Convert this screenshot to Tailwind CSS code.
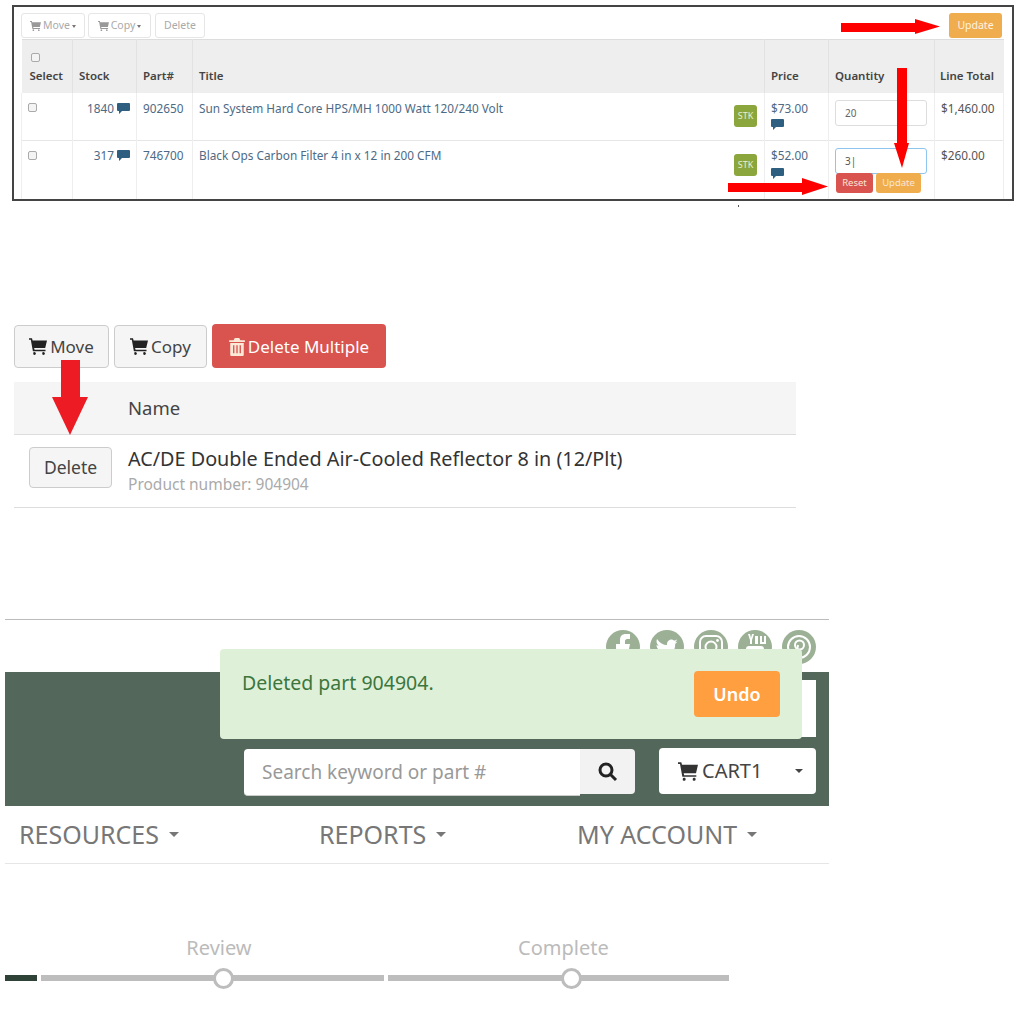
<!DOCTYPE html>
<html lang="en">

<head>
    <meta charset="UTF-8">
    <title>Cart help</title>
    <script src="https://cdn.jsdelivr.net/npm/@tailwindcss/browser@4"></script>
</head>

<body class="bg-white font-['Noto_Sans',sans-serif] text-[#333]">
    <div class="relative w-[1018px] h-[1017px] overflow-hidden pt-[5px]">

        <!-- Cart table panel -->
        <section class="relative ml-[12px] w-[1002px] h-[196px] border-2 border-[#444] overflow-hidden pl-[7px] pr-[10px] pt-[6px]">
            <div class="flex justify-between h-[26px]">
                <div class="flex text-[10.5px] text-[#aaa]">
                    <span class="flex items-center justify-center gap-[2px] w-[64px] h-[25px] pt-[1px] border border-[#e6e6e6] rounded-[3px]">
                        <svg class="w-[11px] h-[10px]" viewBox="0 0 12 11" fill="#999"><path d="M0 0h2l.4 1.5H12l-1.2 5H3.4l.3 1.2H11v1H2.6L1.2 1H0zM4 9.3a.9.9 0 1 0 0 1.7.9.9 0 0 0 0-1.7zm6 0a.9.9 0 1 0 0 1.7.9.9 0 0 0 0-1.7z"/></svg>
                        Move <span class="border-x-[2px] border-t-[3px] border-x-transparent border-t-[#777]"></span>
                    </span>
                    <span class="flex items-center justify-center gap-[2px] w-[63px] h-[25px] pt-[1px] ml-[3px] border border-[#e6e6e6] rounded-[3px]">
                        <svg class="w-[11px] h-[10px]" viewBox="0 0 12 11" fill="#999"><path d="M0 0h2l.4 1.5H12l-1.2 5H3.4l.3 1.2H11v1H2.6L1.2 1H0zM4 9.3a.9.9 0 1 0 0 1.7.9.9 0 0 0 0-1.7zm6 0a.9.9 0 1 0 0 1.7.9.9 0 0 0 0-1.7z"/></svg>
                        Copy <span class="border-x-[2px] border-t-[3px] border-x-transparent border-t-[#777]"></span>
                    </span>
                    <span class="flex items-center justify-center w-[50px] h-[25px] pt-[1px] ml-[4px] border border-[#e6e6e6] rounded-[3px]">Delete</span>
                </div>
                <span class="flex items-center justify-center w-[53px] h-[25px] pt-[1px] bg-[#f0ad4e] rounded-[3px] text-[10.5px] text-[#fdf3e0]">Update</span>
            </div>

            <table class="table-fixed w-[982px] text-[11.8px] border-t border-[#ddd]">
                <colgroup>
                    <col class="w-[51px]"><col class="w-[64px]"><col class="w-[56px]"><col class="w-[572px]">
                    <col class="w-[64px]"><col class="w-[106px]"><col class="w-[69px]">
                </colgroup>
                <thead class="bg-[#eeeeee] text-[#444] text-[11.5px]">
                    <tr class="h-[53px] align-bottom">
                        <th class="text-left font-semibold border-r border-[#e2e2e2] pl-[8px] pb-[8px]">
                            <span class="block w-[9px] h-[9px] ml-[1px] mb-[5px] border border-[#aaa] rounded-[2px] bg-[#f4f4f4]"></span>Select
                        </th>
                        <th class="text-left font-semibold border-r border-[#e2e2e2] pl-[6px] pb-[8px]">Stock</th>
                        <th class="text-left font-semibold border-r border-[#e2e2e2] pl-[6px] pb-[8px]">Part#</th>
                        <th class="text-left font-semibold border-r border-[#e2e2e2] pl-[6px] pb-[8px]">Title</th>
                        <th class="text-left font-semibold border-r border-[#e2e2e2] pl-[6px] pb-[8px]">Price</th>
                        <th class="text-left font-semibold border-r border-[#e2e2e2] pl-[6px] pb-[8px]">Quantity</th>
                        <th class="text-left font-semibold pl-[5px] pb-[8px]">Line Total</th>
                    </tr>
                </thead>
                <tbody class="text-[#4d6a85]">
                    <tr class="h-[48px] align-top border-b border-[#e6e6e6]">
                        <td class="border-x border-[#eee] pl-[6px] pt-[10px]"><span class="block w-[9px] h-[9px] border border-[#aaa] rounded-[2px] bg-[#f4f4f4]"></span></td>
                        <td class="border-r border-[#eee] pr-[6px] pt-[7px]">
                            <span class="flex items-center justify-end gap-[3px]">1840
                                <svg class="w-[13px] h-[11px]" viewBox="0 0 13 11" fill="#2f5f80"><path d="M1 0h11a1 1 0 0 1 1 1v6a1 1 0 0 1-1 1H5l-3 3V8H1a1 1 0 0 1-1-1V1a1 1 0 0 1 1-1z"/></svg>
                            </span>
                        </td>
                        <td class="border-r border-[#eee] pl-[6px] pt-[7px]">902650</td>
                        <td class="border-r border-[#eee] pl-[6px] pt-[7px] pr-[7px]">
                            <span class="flex justify-between items-start">
                                Sun System Hard Core HPS/MH 1000 Watt 120/240 Volt
                                <span class="mt-[5px] w-[23px] h-[22px] bg-[#8aa63c] rounded-[3px] text-[9px] leading-[22px] text-center text-[#e8f0d0]">STK</span>
                            </span>
                        </td>
                        <td class="border-r border-[#eee] pl-[6px] pt-[7px]">
                            $73.00
                            <svg class="block w-[13px] h-[11px] mt-[2px]" viewBox="0 0 13 11" fill="#2f5f80"><path d="M1 0h11a1 1 0 0 1 1 1v6a1 1 0 0 1-1 1H5l-3 3V8H1a1 1 0 0 1-1-1V1a1 1 0 0 1 1-1z"/></svg>
                        </td>
                        <td class="border-r border-[#eee] pl-[6px] pt-[7px]">
                            <span class="block w-[92px] h-[26px] border border-[#ddd] rounded-[3px] pl-[9px] text-[10px] leading-[24px] text-[#666]">20</span>
                        </td>
                        <td class="pl-[6px] pt-[7px] border-r border-[#eee] text-[#555]">$1,460.00</td>
                    </tr>
                    <tr class="h-[60px] align-top">
                        <td class="border-x border-[#eee] pl-[6px] pt-[10px]"><span class="block w-[9px] h-[9px] border border-[#aaa] rounded-[2px] bg-[#f4f4f4]"></span></td>
                        <td class="border-r border-[#eee] pr-[6px] pt-[6px]">
                            <span class="flex items-center justify-end gap-[3px]">317
                                <svg class="w-[13px] h-[11px]" viewBox="0 0 13 11" fill="#2f5f80"><path d="M1 0h11a1 1 0 0 1 1 1v6a1 1 0 0 1-1 1H5l-3 3V8H1a1 1 0 0 1-1-1V1a1 1 0 0 1 1-1z"/></svg>
                            </span>
                        </td>
                        <td class="border-r border-[#eee] pl-[6px] pt-[6px]">746700</td>
                        <td class="border-r border-[#eee] pl-[6px] pt-[6px] pr-[7px]">
                            <span class="flex justify-between items-start">
                                Black Ops Carbon Filter 4 in x 12 in 200 CFM
                                <span class="mt-[7px] w-[23px] h-[22px] bg-[#8aa63c] rounded-[3px] text-[9px] leading-[22px] text-center text-[#e8f0d0]">STK</span>
                            </span>
                        </td>
                        <td class="border-r border-[#eee] pl-[6px] pt-[6px]">
                            $52.00
                            <svg class="block w-[13px] h-[11px] mt-[3px]" viewBox="0 0 13 11" fill="#2f5f80"><path d="M1 0h11a1 1 0 0 1 1 1v6a1 1 0 0 1-1 1H5l-3 3V8H1a1 1 0 0 1-1-1V1a1 1 0 0 1 1-1z"/></svg>
                        </td>
                        <td class="border-r border-[#eee] pl-[6px] pt-[7px]">
                            <span class="block w-[92px] h-[26px] border border-[#8ec5ee] rounded-[3px] pl-[9px] text-[10px] leading-[24px] text-[#555]">3|</span>
                            <span class="flex gap-[3px] ml-[1px] mt-[-1px] text-[9.5px] text-[#f8e6d8]">
                                <span class="w-[37px] h-[20px] leading-[20px] text-center bg-[#d9534f] rounded-[3px]">Reset</span>
                                <span class="w-[45px] h-[20px] leading-[20px] text-center bg-[#f0ad4e] rounded-[3px]">Update</span>
                            </span>
                        </td>
                        <td class="pl-[6px] pt-[6px] border-r border-[#eee] text-[#555]">$260.00</td>
                    </tr>
                </tbody>
            </table>
        </section>

        <!-- Delete list panel -->
        <section class="ml-[14px] mt-[124px] w-[782px]">
            <div class="flex gap-[5px] h-[43px] text-[17px] text-[#444]">
                <span class="flex items-center gap-[3px] w-[95px] justify-center h-[43px] bg-[#f5f5f5] border border-[#ccc] rounded-[4px]">
                    <svg class="w-[18px] h-[17px]" viewBox="0 0 12 11" fill="#222"><path d="M0 0h2l.4 1.5H12l-1.2 5H3.4l.3 1.2H11v1H2.6L1.2 1H0zM4 9.3a.9.9 0 1 0 0 1.7.9.9 0 0 0 0-1.7zm6 0a.9.9 0 1 0 0 1.7.9.9 0 0 0 0-1.7z"/></svg>
                    Move
                </span>
                <span class="flex items-center gap-[3px] w-[93px] justify-center h-[43px] bg-[#f5f5f5] border border-[#ccc] rounded-[4px]">
                    <svg class="w-[18px] h-[17px]" viewBox="0 0 12 11" fill="#222"><path d="M0 0h2l.4 1.5H12l-1.2 5H3.4l.3 1.2H11v1H2.6L1.2 1H0zM4 9.3a.9.9 0 1 0 0 1.7.9.9 0 0 0 0-1.7zm6 0a.9.9 0 1 0 0 1.7.9.9 0 0 0 0-1.7z"/></svg>
                    Copy
                </span>
                <span class="flex items-center gap-[3px] w-[174px] justify-center h-[44px] -mt-[1px] pt-[1px] bg-[#d9534f] rounded-[4px] text-white">
                    <svg class="w-[16px] h-[18px]" viewBox="0 0 14 16" fill="#fbe9d8"><path d="M5 0h4l1 2h4v1.500H0V2h4zM1 4.500h12V15a1 1 0 0 1-1 1H2a1 1 0 0 1-1-1zm2.500 2v7h1.200v-7zm2.900 0v7h1.200v-7zm2.900 0v7h1.200v-7z"/></svg>
                    Delete Multiple
                </span>
            </div>
            <div class="flex items-center h-[53px] mt-[14px] pl-[114px] bg-[#f5f5f5] border-b border-[#ddd] text-[18.5px] text-[#444]">Name</div>
            <div class="flex h-[73px] border-b border-[#ddd]">
                <span class="flex items-center justify-center mt-[12px] ml-[15px] w-[83px] h-[41px] bg-[#f5f5f5] border border-[#ccc] rounded-[4px] text-[17.5px] text-[#444]">Delete</span>
                <div class="ml-[16px] mt-[10px]">
                    <p class="text-[19.8px] leading-[27px] text-[#333]">AC/DE Double Ended Air-Cooled Reflector 8 in (12/Plt)</p>
                    <p class="text-[15.5px] leading-[25px] text-[#aaa]">Product number: 904904</p>
                </div>
            </div>
        </section>

        <!-- Header with undo alert -->
        <section class="relative ml-[5px] mt-[111px] w-[824px] border-t border-[#bbb]">
            <div class="flex justify-end gap-[10px] h-[52px] pr-[13px] pt-[10px]">
                <svg class="w-[34px] h-[34px]" viewBox="0 0 34 34"><circle cx="17" cy="17" r="17" fill="#9bb095"/><path d="M14 34V19h-4v-5h4v-4c0-4 2-6 6-6h4v5h-3c-1 0-2 1-2 2v3h5l-1 5h-4v15z" fill="#fff"/></svg>
                <svg class="w-[34px] h-[34px]" viewBox="0 0 34 34"><circle cx="17" cy="17" r="17" fill="#9bb095"/><path d="M7 9c3 4 6 6 10 6-.6-4 4-7 7-4.500 1.200 0 2-.5 3-1-.3 1.200-1 2-2 2.700 1 0 1.800-.3 2.500-.6-.6 1-1.400 1.700-2.300 2.400C25.500 22 19 28 12 27c-2 0-4-.5-6-1.800 2.500.2 4.500-.4 6.500-1.800-2.200 0-3.800-1.400-4.500-3.200h2.200C7.800 19.500 6.500 17.500 6.500 15c.7.4 1.400.6 2.200.6C6.500 14 6 11.200 7 9z" fill="#fff"/></svg>
                <svg class="w-[34px] h-[34px]" viewBox="0 0 34 34" fill="none"><circle cx="17" cy="17" r="17" fill="#9bb095"/><rect x="6" y="6" width="22" height="22" rx="6" stroke="#fff" stroke-width="2"/><circle cx="17" cy="17" r="5.500" stroke="#fff" stroke-width="2"/><circle cx="23.500" cy="10.500" r="1.400" fill="#fff"/></svg>
                <svg class="w-[34px] h-[34px]" viewBox="0 0 34 34"><circle cx="17" cy="17" r="17" fill="#9bb095"/><path d="M10 4h2l1 4 1-4h2l-2 6v4h-2v-4zM17 6h3v8h-3zM22 6h2v6h2V6h2v8h-6z" fill="#fff"/><rect x="8" y="16" width="18" height="12" rx="3" fill="#fff"/></svg>
                <svg class="w-[34px] h-[34px]" viewBox="0 0 34 34" fill="none"><circle cx="17" cy="17" r="17" fill="#9bb095"/><circle cx="17" cy="17" r="11" stroke="#fff" stroke-width="2"/><circle cx="17.500" cy="15" r="4.500" stroke="#fff" stroke-width="2"/><path d="M16 15l-2 11" stroke="#fff" stroke-width="2"/></svg>
            </div>
            <div class="h-[134px] bg-[#53675a] pt-[8px]">
                <div class="ml-auto mr-[13px] w-[200px] h-[57px] bg-white"></div>
                <div class="flex justify-end items-start gap-[24px] mt-[11px] mr-[13px]">
                    <div class="flex mt-[1px]">
                        <span class="flex items-center w-[336px] h-[47px] pl-[18px] bg-white border-b border-[#ccc] rounded-l-[4px] text-[19px] text-[#999]">Search keyword or part #</span>
                        <span class="flex items-center justify-center w-[55px] h-[45px] bg-[#f2f2f2] rounded-r-[4px]">
                            <svg class="w-[20px] h-[20px]" viewBox="0 0 20 20" fill="none" stroke="#222" stroke-width="3"><circle cx="8" cy="8" r="6"/><path d="M12.500 12.500L18 18"/></svg>
                        </span>
                    </div>
                    <div class="flex items-center w-[157px] h-[46px] pl-[19px] bg-white rounded-[4px] text-[20px] text-[#444]">
                        <svg class="w-[20px] h-[19px] mr-[4px]" viewBox="0 0 12 11" fill="#333"><path d="M0 0h2l.4 1.5H12l-1.2 5H3.400l.3 1.2H11v1H2.600L1.200 1H0zM4 9.300a.9.9 0 1 0 0 1.700.9.9 0 0 0 0-1.700zm6 0a.9.9 0 1 0 0 1.700.9.9 0 0 0 0-1.700z"/></svg>
                        CART1
                        <span class="ml-auto mr-[13px] border-x-[4px] border-t-[4px] border-x-transparent border-t-[#444]"></span>
                    </div>
                </div>
            </div>

            <!-- Alert lies over the header -->
            <div class="absolute left-[215px] top-[29px] flex justify-between w-[582px] h-[90px] pl-[22px] pr-[22px] pt-[20px] bg-[#dff0d8] rounded-[4px]">
                <span class="text-[19.5px] leading-[28px] text-[#3c763d]">Deleted part 904904.</span>
                <span class="flex items-center justify-center w-[86px] h-[46px] mt-[2px] bg-[#ff9f40] rounded-[4px] text-[18px] font-semibold text-white">Undo</span>
            </div>

            <nav class="flex h-[58px] items-center border-b border-[#e6e6e6] text-[25px] text-[#777]">
                <span class="flex items-center gap-[10px] ml-[14px] w-[300px]">RESOURCES <span class="border-x-[5px] border-t-[5px] border-x-transparent border-t-[#777]"></span></span>
                <span class="flex items-center gap-[10px] w-[258px]">REPORTS <span class="border-x-[5px] border-t-[5px] border-x-transparent border-t-[#777]"></span></span>
                <span class="flex items-center gap-[10px]">MY ACCOUNT <span class="border-x-[5px] border-t-[5px] border-x-transparent border-t-[#777]"></span></span>
            </nav>
        </section>

        <!-- Checkout progress -->
        <section class="ml-[5px] mt-[72px] w-[725px]">
            <div class="flex text-[20px] leading-[24px] text-[#bbb]">
                <span class="ml-[43px] w-[350px] text-center">Review</span>
                <span class="ml-[7px] w-[341px] text-center">Complete</span>
            </div>
            <div class="flex items-center gap-[4px] mt-[7px] h-[22px]">
                <span class="w-[32px] h-[6px] bg-[#2f4237]"></span>
                <div class="flex items-center w-[343px] h-[6px] bg-[#bdbdbd]">
                    <span class="ml-[172px] w-[21px] h-[21px] rounded-full bg-white border-[3px] border-[#bdbdbd]"></span>
                </div>
                <div class="flex items-center w-[341px] h-[6px] bg-[#bdbdbd]">
                    <span class="ml-[173px] w-[21px] h-[21px] rounded-full bg-white border-[3px] border-[#bdbdbd]"></span>
                </div>
            </div>
        </section>

        <!-- Red annotation arrows -->
        <svg class="absolute left-0 top-0 w-[1018px] h-[1017px] pointer-events-none" viewBox="0 0 1018 1017" fill="#f00">
            <path d="M841 23h74v-4l25 7.500-25 7.500v-2h-74z"/>
            <path d="M897 68h10v75h2l-7 25-8-25h3z"/>
            <path d="M728 183h74v-5l26 8.500-26 8.500v-3h-74z"/>
            <path d="M61 360h19v37h8l-18 38-18-38h9z" fill="#ed1c24"/>
            <rect x="738" y="205" width="1" height="2" fill="#555"/>
        </svg>
    </div>
</body>

</html>
